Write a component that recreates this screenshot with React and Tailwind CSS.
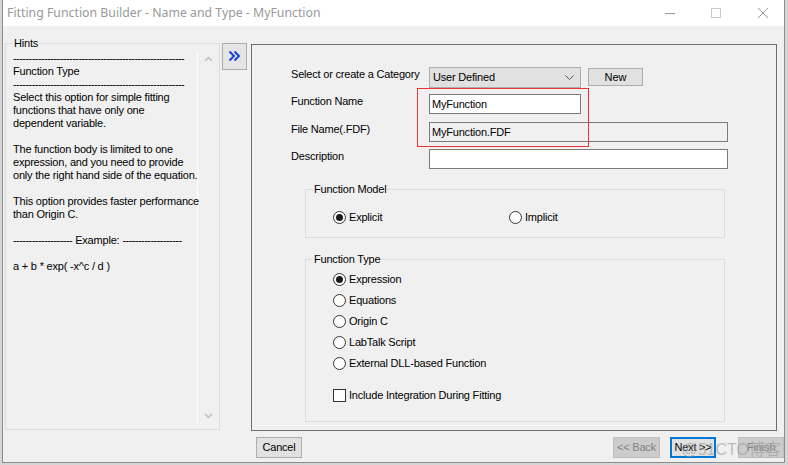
const font = { fontFamily: '"Liberation Sans", Arial, sans-serif' };

const Radio = ({ checked, label }) => (
  <div className="flex items-center gap-[3px]">
    <span className="flex h-[13px] w-[13px] items-center justify-center rounded-full border border-[#333] bg-white">
      {checked && <span className="h-[7px] w-[7px] rounded-full bg-[#1a1a1a]" />}
    </span>
    <span>{label}</span>
  </div>
);

const Group = ({ title, className, children }) => (
  <div className={`relative border border-[#dcdcdc] ${className}`}>
    <span className="absolute -top-[8px] left-[7px] bg-[#f0f0f0] px-[1px] leading-[14px]">{title}</span>
    {children}
  </div>
);

const Btn = ({ children, disabled, focused, className = '' }) => (
  <div
    className={`flex h-[21px] items-center justify-center ${
      focused
        ? 'border-2 border-[#0078d7] bg-[#e1e1e1] text-black'
        : disabled
        ? 'border border-[#bfbfbf] bg-[#cccccc] text-[#838383]'
        : 'border border-[#adadad] bg-[#e1e1e1] text-black'
    } ${className}`}
  >
    {children}
  </div>
);

const DASHES = '-------------------------------------------------------';
const hints = [
  { t: DASHES, dash: true },
  { t: 'Function Type' },
  { t: DASHES, dash: true },
  { t: 'Select this option for simple fitting' },
  { t: 'functions that have only one' },
  { t: 'dependent variable.' },
  { t: '' },
  { t: 'The function body is limited to one' },
  { t: 'expression, and you need to provide' },
  { t: 'only the right hand side of the equation.' },
  { t: '' },
  { t: 'This option provides faster performance' },
  { t: 'than Origin C.' },
  { t: '' },
  { t: 'example' },
  { t: '' },
  { t: 'a + b * exp( -x^c / d )' },
];

export default function App() {
  return (
    <div className="h-[465px] w-[788px] overflow-hidden bg-[#d6d6d6] pl-[2px] text-[11px] tracking-[-0.2px] text-black" style={font}>
      <div className="flex h-[463px] w-[783px] flex-col border-x border-b border-[#8c8c8c] bg-[#f0f0f0]">
        {/* title bar */}
        <div className="flex h-[26px] items-center bg-white">
          <span className="pl-[4px] text-[12.3px] tracking-normal text-[#999]" style={{ fontFamily: '"Noto Sans", "Liberation Sans", sans-serif' }}>
            Fitting Function Builder - Name and Type - MyFunction
          </span>
          <div className="ml-auto flex items-center">
            <svg width="12" height="12" className="mr-[34px]"><line x1="1" y1="6.5" x2="11" y2="6.5" stroke="#999" /></svg>
            <svg width="12" height="12" className="mr-[35px]"><rect x="1.5" y="1.5" width="9" height="9" fill="none" stroke="#ccc" /></svg>
            <svg width="12" height="12" className="mr-[15px]"><path d="M1 1L11 11M11 1L1 11" stroke="#999" /></svg>
          </div>
        </div>

        {/* main area */}
        <div className="ml-[2px] mt-[17px] flex h-[388px] items-start">
          {/* Hints */}
          <Group title="Hints" className="h-[387px] w-[215px]">
            <div className="mt-[7px] flex h-[373px]">
              <div className="w-[192px] border-r border-white pl-[7px] pt-[1px] leading-[13px]">
                {hints.map((h, i) =>
                  h.t === 'example' ? (
                    <div key={i} className="flex h-[13px] items-center whitespace-nowrap">
                      <span className="tracking-[-0.55px]">-------------------</span>
                      <span className="mx-[3px]">Example:</span>
                      <span className="tracking-[-0.55px]">-------------------</span>
                    </div>
                  ) : (
                    <div key={i} className={`h-[13px] whitespace-nowrap ${h.dash ? 'tracking-[-0.55px]' : ''}`}>
                      {h.t}
                    </div>
                  )
                )}
              </div>
              <div className="flex w-[20px] flex-col items-center justify-between py-[5px]">
                <svg width="9" height="6"><path d="M1 5L4.5 1.5L8 5" fill="none" stroke="#bfbfbf" strokeWidth="1.5" /></svg>
                <svg width="9" height="6"><path d="M1 1L4.5 4.5L8 1" fill="none" stroke="#bfbfbf" strokeWidth="1.5" /></svg>
              </div>
            </div>
          </Group>

          {/* >> */}
          <div className="ml-[2px] flex h-[27px] w-[25px] justify-center border border-[#adadad] bg-[#e5e5e5] pt-[6px]">
            <svg width="13" height="12" viewBox="0 0 13 12">
              <path d="M1.5 1.5L6 6L1.5 10.5M6.5 1.5L11 6L6.5 10.5" fill="none" stroke="#1c3fd8" strokeWidth="2" />
            </svg>
          </div>

          {/* right panel */}
          <div className="relative ml-[4px] mt-[1px] h-[387px] w-[526px] border border-[#6e6e6e] pl-[39px] pt-[22px]">
            <div className="flex h-[21px] items-start">
              <span className="w-[138px] leading-[14px]">Select or create a Category</span>
              <div className="flex h-[21px] w-[152px] items-center justify-between border border-[#adadad] bg-[#e1e1e1] pl-[3px] pr-[6px]">
                <span>User Defined</span>
                <svg width="9" height="5"><path d="M0.5 0.5L4.5 4.5L8.5 0.5" fill="none" stroke="#555" /></svg>
              </div>
              <Btn className="ml-[7px] mt-[1px] !h-[18px] w-[55px] tracking-normal">New</Btn>
            </div>
            <div className="mt-[6px] flex h-[20px] items-start">
              <span className="w-[138px] leading-[14px]">Function Name</span>
              <div className="flex h-[20px] w-[152px] items-center border border-[#7a7a7a] bg-white pl-[2px]">MyFunction</div>
            </div>
            <div className="mt-[8px] flex h-[20px] items-start">
              <span className="w-[138px] leading-[14px]">File Name(.FDF)</span>
              <div className="flex h-[20px] w-[299px] items-center border border-[#7a7a7a] bg-[#f0f0f0] pl-[2px]">MyFunction.FDF</div>
            </div>
            <div className="mt-[7px] flex h-[20px] items-start">
              <span className="w-[138px] leading-[14px]">Description</span>
              <div className="h-[20px] w-[299px] border border-[#7a7a7a] bg-white" />
            </div>

            <Group title="Function Model" className="ml-[14px] mt-[20px] h-[49px] w-[420px]">
              <div className="mt-[17px] flex h-[21px] items-center pl-[27px]">
                <div className="w-[176px]"><Radio checked label="Explicit" /></div>
                <Radio label="Implicit" />
              </div>
            </Group>

            <Group title="Function Type" className="ml-[14px] mt-[21px] h-[163px] w-[420px]">
              <div className="flex flex-col pl-[27px] pt-[9px]">
                {['Expression', 'Equations', 'Origin C', 'LabTalk Script', 'External DLL-based Function'].map((l, i) => (
                  <div key={l} className="flex h-[21px] items-center">
                    <Radio checked={i === 0} label={l} />
                  </div>
                ))}
                <div className="mt-[11px] flex h-[21px] items-center gap-[3px]">
                  <span className="h-[13px] w-[13px] border border-[#333] bg-white" />
                  <span>Include Integration During Fitting</span>
                </div>
              </div>
            </Group>

            {/* highlight box */}
            <div className="absolute left-[165px] top-[43px] h-[59px] w-[172px] border border-[#ee3333]" />
          </div>
        </div>

        {/* bottom buttons */}
        <div className="relative mt-[6px] flex h-[21px] items-center justify-between pl-[253px]">
          <Btn className="w-[46px]">Cancel</Btn>
          <div className="flex items-center">
            <Btn disabled className="w-[47px]">&lt;&lt; Back</Btn>
            <Btn focused className="ml-[10px] w-[46px]">Next &gt;&gt;</Btn>
            <Btn disabled className="ml-[22px] w-[46px]">Finish</Btn>
          </div>
          <span
            className="pointer-events-none absolute right-[3px] top-[1px] text-[16px] tracking-normal text-[#9a9a9a] opacity-60"
            style={{ fontFamily: '"Liberation Sans", "Noto Sans CJK SC", sans-serif' }}
          >
            @51CTO博客
          </span>
        </div>
      </div>
    </div>
  );
}
